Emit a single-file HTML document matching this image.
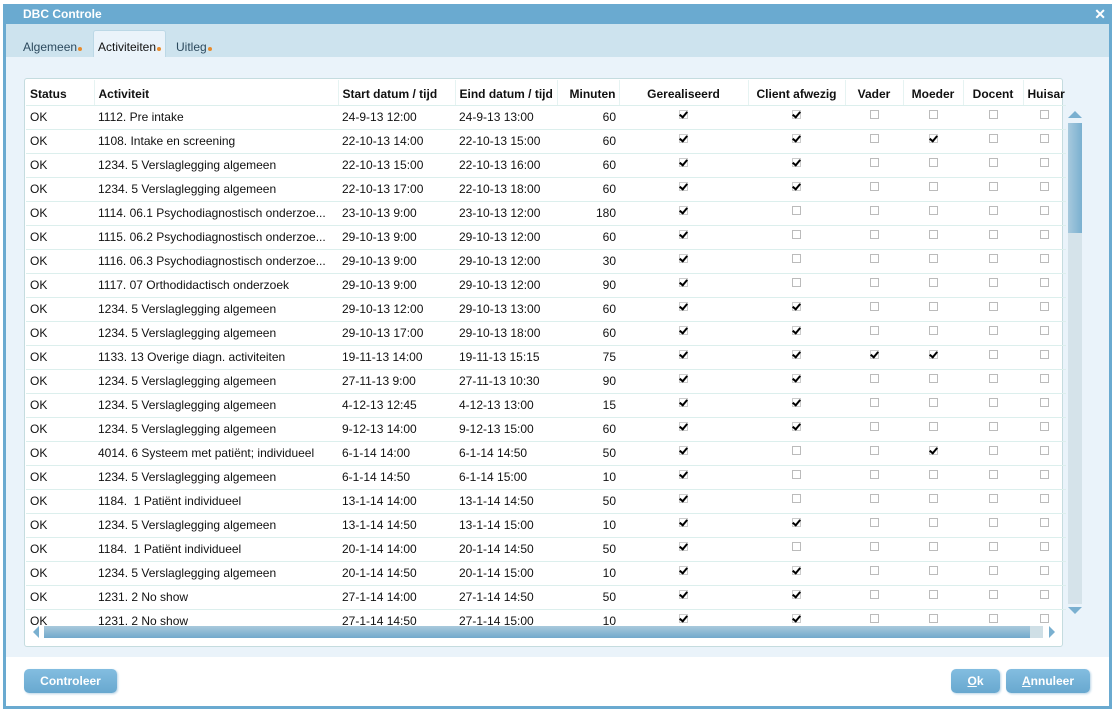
<!DOCTYPE html>
<html><head><meta charset="utf-8"><style>
*{box-sizing:border-box;margin:0;padding:0}
body{width:1112px;height:709px;background:#fff;font-family:"Liberation Sans",Arial,sans-serif;font-size:12px;color:#111;position:relative;overflow:hidden}
.dlg{position:absolute;left:3px;top:4px;width:1109px;height:705px;background:#fff;border:3px solid #6aaad0;border-top:0}
.title{position:absolute;left:3px;top:4px;width:1109px;height:20px;background:#6aaad0;color:#fff;font-weight:bold;font-size:12px;line-height:21px;padding-left:20px}
.x{position:absolute;right:6px;top:0;font-size:14px}
.tabs{position:absolute;left:6px;top:24px;width:1103px;height:33px;background:#cde3ee}
.tab{position:absolute;top:16px;font-size:12px;color:#2c4a5e}
.tab i{display:inline-block;width:4px;height:4px;border-radius:2px;background:#e88b2c;margin-left:1px}
.tab.act{top:6px;height:27px;background:#eaf3fa;border:1px solid #bcd8e6;border-bottom:0;border-radius:3px 3px 0 0;padding:9px 4px 0 4px;color:#111}
.content{position:absolute;left:6px;top:57px;width:1103px;height:600px;background:#eaf3fa}
.panel{position:absolute;left:24px;top:78px;width:1039px;height:569px;background:#fff;border:1px solid #c5dcdf;border-radius:3px}
.tw{position:absolute;left:26px;top:80px;width:1040px;height:546px;overflow:hidden}
table{border-collapse:collapse;table-layout:fixed;width:1040px}
td,th{height:24px;padding:0 4px;white-space:nowrap;overflow:hidden;border-bottom:1px solid #dcefed}
th{height:25px;padding-top:3px;font-weight:bold;text-align:left;border-left:1px solid #e6f3f2;border-bottom:1px solid #dcefed}
th:first-child{border-left:0}
td.n{text-align:right;padding-right:3px}
td.c,th.c{text-align:center}
.b{display:inline-block;width:9px;height:9px;border:1px solid #bbb;vertical-align:3px;position:relative}
.k{display:inline-block;width:9px;height:9px;border:1px solid #ccc;vertical-align:3px;position:relative}
.k:after{content:"";position:absolute;left:1px;top:-1px;width:3px;height:6px;border:solid #000;border-width:0 2px 2px 0;transform:rotate(40deg)}
.vs{position:absolute;left:1068px;top:123px;width:14px;height:110px;background:linear-gradient(90deg,#a7c9dd,#7ab0d0)}
.vt{position:absolute;left:1068px;top:233px;width:14px;height:371px;background:#d5e3ea}
.hs{position:absolute;left:44px;top:626px;width:986px;height:12px;background:linear-gradient(#a9c9dc,#72a9cc)}
.ht{position:absolute;left:1030px;top:626px;width:13px;height:12px;background:#cfdfe6}
.btn{position:absolute;top:669px;height:24px;border-radius:5px;background:linear-gradient(#83bde0,#68a8cf);color:#fff;font-weight:bold;text-align:center;line-height:24px;box-shadow:1px 1px 2px #b9d4e6}
</style></head><body>
<div class="dlg"></div>
<div class="title">DBC Controle<span class="x">✕</span></div>
<div class="tabs">
<div class="tab" style="left:17px">Algemeen<i></i></div>
<div class="tab act" style="left:87px">Activiteiten<i></i></div>
<div class="tab" style="left:170px">Uitleg<i></i></div>
</div>
<div class="content"></div>
<div class="panel"></div>
<div class="tw"><table>
<colgroup><col style="width:68px"><col style="width:244px"><col style="width:117px"><col style="width:102px"><col style="width:62px"><col style="width:129px"><col style="width:97px"><col style="width:58px"><col style="width:60px"><col style="width:60px"><col style="width:43px"></colgroup>
<tr><th>Status</th><th>Activiteit</th><th>Start datum / tijd</th><th>Eind datum / tijd</th><th style="text-align:right;padding-right:3px">Minuten</th><th class="c">Gerealiseerd</th><th class="c">Client afwezig</th><th class="c">Vader</th><th class="c">Moeder</th><th class="c">Docent</th><th>Huisar</th></tr>
<tr><td>OK</td><td>1112. Pre intake</td><td>24-9-13 12:00</td><td>24-9-13 13:00</td><td class="n">60</td><td class="c"><i class="k"></i></td><td class="c"><i class="k"></i></td><td class="c"><i class="b"></i></td><td class="c"><i class="b"></i></td><td class="c"><i class="b"></i></td><td class="c"><i class="b"></i></td></tr>
<tr><td>OK</td><td>1108. Intake en screening</td><td>22-10-13 14:00</td><td>22-10-13 15:00</td><td class="n">60</td><td class="c"><i class="k"></i></td><td class="c"><i class="k"></i></td><td class="c"><i class="b"></i></td><td class="c"><i class="k"></i></td><td class="c"><i class="b"></i></td><td class="c"><i class="b"></i></td></tr>
<tr><td>OK</td><td>1234. 5 Verslaglegging algemeen</td><td>22-10-13 15:00</td><td>22-10-13 16:00</td><td class="n">60</td><td class="c"><i class="k"></i></td><td class="c"><i class="k"></i></td><td class="c"><i class="b"></i></td><td class="c"><i class="b"></i></td><td class="c"><i class="b"></i></td><td class="c"><i class="b"></i></td></tr>
<tr><td>OK</td><td>1234. 5 Verslaglegging algemeen</td><td>22-10-13 17:00</td><td>22-10-13 18:00</td><td class="n">60</td><td class="c"><i class="k"></i></td><td class="c"><i class="k"></i></td><td class="c"><i class="b"></i></td><td class="c"><i class="b"></i></td><td class="c"><i class="b"></i></td><td class="c"><i class="b"></i></td></tr>
<tr><td>OK</td><td>1114. 06.1 Psychodiagnostisch onderzoe...</td><td>23-10-13 9:00</td><td>23-10-13 12:00</td><td class="n">180</td><td class="c"><i class="k"></i></td><td class="c"><i class="b"></i></td><td class="c"><i class="b"></i></td><td class="c"><i class="b"></i></td><td class="c"><i class="b"></i></td><td class="c"><i class="b"></i></td></tr>
<tr><td>OK</td><td>1115. 06.2 Psychodiagnostisch onderzoe...</td><td>29-10-13 9:00</td><td>29-10-13 12:00</td><td class="n">60</td><td class="c"><i class="k"></i></td><td class="c"><i class="b"></i></td><td class="c"><i class="b"></i></td><td class="c"><i class="b"></i></td><td class="c"><i class="b"></i></td><td class="c"><i class="b"></i></td></tr>
<tr><td>OK</td><td>1116. 06.3 Psychodiagnostisch onderzoe...</td><td>29-10-13 9:00</td><td>29-10-13 12:00</td><td class="n">30</td><td class="c"><i class="k"></i></td><td class="c"><i class="b"></i></td><td class="c"><i class="b"></i></td><td class="c"><i class="b"></i></td><td class="c"><i class="b"></i></td><td class="c"><i class="b"></i></td></tr>
<tr><td>OK</td><td>1117. 07 Orthodidactisch onderzoek</td><td>29-10-13 9:00</td><td>29-10-13 12:00</td><td class="n">90</td><td class="c"><i class="k"></i></td><td class="c"><i class="b"></i></td><td class="c"><i class="b"></i></td><td class="c"><i class="b"></i></td><td class="c"><i class="b"></i></td><td class="c"><i class="b"></i></td></tr>
<tr><td>OK</td><td>1234. 5 Verslaglegging algemeen</td><td>29-10-13 12:00</td><td>29-10-13 13:00</td><td class="n">60</td><td class="c"><i class="k"></i></td><td class="c"><i class="k"></i></td><td class="c"><i class="b"></i></td><td class="c"><i class="b"></i></td><td class="c"><i class="b"></i></td><td class="c"><i class="b"></i></td></tr>
<tr><td>OK</td><td>1234. 5 Verslaglegging algemeen</td><td>29-10-13 17:00</td><td>29-10-13 18:00</td><td class="n">60</td><td class="c"><i class="k"></i></td><td class="c"><i class="k"></i></td><td class="c"><i class="b"></i></td><td class="c"><i class="b"></i></td><td class="c"><i class="b"></i></td><td class="c"><i class="b"></i></td></tr>
<tr><td>OK</td><td>1133. 13 Overige diagn. activiteiten</td><td>19-11-13 14:00</td><td>19-11-13 15:15</td><td class="n">75</td><td class="c"><i class="k"></i></td><td class="c"><i class="k"></i></td><td class="c"><i class="k"></i></td><td class="c"><i class="k"></i></td><td class="c"><i class="b"></i></td><td class="c"><i class="b"></i></td></tr>
<tr><td>OK</td><td>1234. 5 Verslaglegging algemeen</td><td>27-11-13 9:00</td><td>27-11-13 10:30</td><td class="n">90</td><td class="c"><i class="k"></i></td><td class="c"><i class="k"></i></td><td class="c"><i class="b"></i></td><td class="c"><i class="b"></i></td><td class="c"><i class="b"></i></td><td class="c"><i class="b"></i></td></tr>
<tr><td>OK</td><td>1234. 5 Verslaglegging algemeen</td><td>4-12-13 12:45</td><td>4-12-13 13:00</td><td class="n">15</td><td class="c"><i class="k"></i></td><td class="c"><i class="k"></i></td><td class="c"><i class="b"></i></td><td class="c"><i class="b"></i></td><td class="c"><i class="b"></i></td><td class="c"><i class="b"></i></td></tr>
<tr><td>OK</td><td>1234. 5 Verslaglegging algemeen</td><td>9-12-13 14:00</td><td>9-12-13 15:00</td><td class="n">60</td><td class="c"><i class="k"></i></td><td class="c"><i class="k"></i></td><td class="c"><i class="b"></i></td><td class="c"><i class="b"></i></td><td class="c"><i class="b"></i></td><td class="c"><i class="b"></i></td></tr>
<tr><td>OK</td><td>4014. 6 Systeem met patiënt; individueel</td><td>6-1-14 14:00</td><td>6-1-14 14:50</td><td class="n">50</td><td class="c"><i class="k"></i></td><td class="c"><i class="b"></i></td><td class="c"><i class="b"></i></td><td class="c"><i class="k"></i></td><td class="c"><i class="b"></i></td><td class="c"><i class="b"></i></td></tr>
<tr><td>OK</td><td>1234. 5 Verslaglegging algemeen</td><td>6-1-14 14:50</td><td>6-1-14 15:00</td><td class="n">10</td><td class="c"><i class="k"></i></td><td class="c"><i class="b"></i></td><td class="c"><i class="b"></i></td><td class="c"><i class="b"></i></td><td class="c"><i class="b"></i></td><td class="c"><i class="b"></i></td></tr>
<tr><td>OK</td><td>1184.&nbsp; 1 Patiënt individueel</td><td>13-1-14 14:00</td><td>13-1-14 14:50</td><td class="n">50</td><td class="c"><i class="k"></i></td><td class="c"><i class="b"></i></td><td class="c"><i class="b"></i></td><td class="c"><i class="b"></i></td><td class="c"><i class="b"></i></td><td class="c"><i class="b"></i></td></tr>
<tr><td>OK</td><td>1234. 5 Verslaglegging algemeen</td><td>13-1-14 14:50</td><td>13-1-14 15:00</td><td class="n">10</td><td class="c"><i class="k"></i></td><td class="c"><i class="k"></i></td><td class="c"><i class="b"></i></td><td class="c"><i class="b"></i></td><td class="c"><i class="b"></i></td><td class="c"><i class="b"></i></td></tr>
<tr><td>OK</td><td>1184.&nbsp; 1 Patiënt individueel</td><td>20-1-14 14:00</td><td>20-1-14 14:50</td><td class="n">50</td><td class="c"><i class="k"></i></td><td class="c"><i class="b"></i></td><td class="c"><i class="b"></i></td><td class="c"><i class="b"></i></td><td class="c"><i class="b"></i></td><td class="c"><i class="b"></i></td></tr>
<tr><td>OK</td><td>1234. 5 Verslaglegging algemeen</td><td>20-1-14 14:50</td><td>20-1-14 15:00</td><td class="n">10</td><td class="c"><i class="k"></i></td><td class="c"><i class="k"></i></td><td class="c"><i class="b"></i></td><td class="c"><i class="b"></i></td><td class="c"><i class="b"></i></td><td class="c"><i class="b"></i></td></tr>
<tr><td>OK</td><td>1231. 2 No show</td><td>27-1-14 14:00</td><td>27-1-14 14:50</td><td class="n">50</td><td class="c"><i class="k"></i></td><td class="c"><i class="k"></i></td><td class="c"><i class="b"></i></td><td class="c"><i class="b"></i></td><td class="c"><i class="b"></i></td><td class="c"><i class="b"></i></td></tr>
<tr><td>OK</td><td>1231. 2 No show</td><td>27-1-14 14:50</td><td>27-1-14 15:00</td><td class="n">10</td><td class="c"><i class="k"></i></td><td class="c"><i class="k"></i></td><td class="c"><i class="b"></i></td><td class="c"><i class="b"></i></td><td class="c"><i class="b"></i></td><td class="c"><i class="b"></i></td></tr>
</table></div>
<svg style="position:absolute;left:1066px;top:110px" width="18" height="10"><polygon points="2,8 9,1 16,8" fill="#7ab0d0"/></svg>
<div class="vs"></div><div class="vt"></div>
<svg style="position:absolute;left:1066px;top:606px" width="18" height="10"><polygon points="2,1 9,8 16,1" fill="#7ab0d0"/></svg>
<svg style="position:absolute;left:30px;top:626px" width="12" height="12"><polygon points="9,0 3,6 9,12" fill="#7ab0d0"/></svg>
<div class="hs"></div><div class="ht"></div>
<svg style="position:absolute;left:1047px;top:626px" width="12" height="12"><polygon points="2,0 8,6 2,12" fill="#7ab0d0"/></svg>
<div class="btn" style="left:24px;width:93px">Controleer</div>
<div class="btn" style="left:951px;width:49px"><u>O</u>k</div>
<div class="btn" style="left:1006px;width:84px"><u>A</u>nnuleer</div>
</body></html>
